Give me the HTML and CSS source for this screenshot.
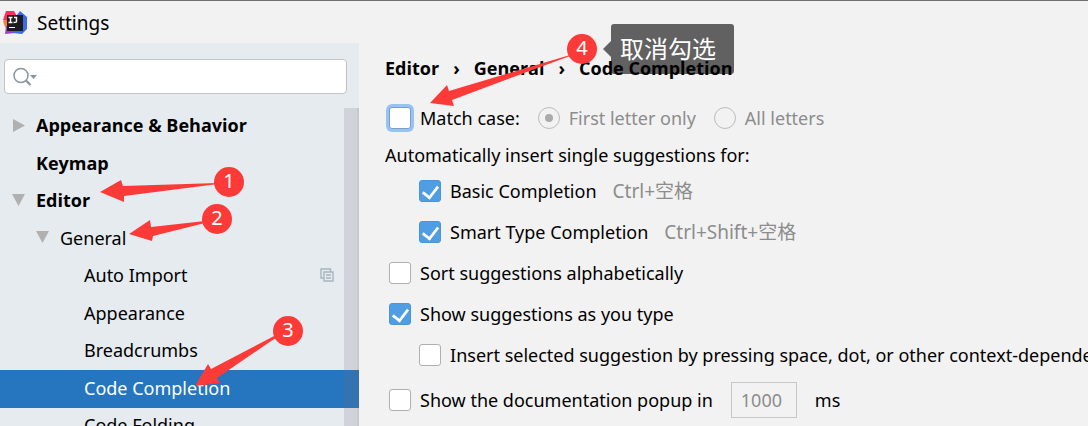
FILE: index.html
```html
<!DOCTYPE html>
<html lang="en">
<head>
<meta charset="utf-8">
<title>Settings</title>
<link rel="stylesheet" href="styles.css">
</head>
<body>
<div class="window">
  <header class="titlebar">
    <svg class="logo" viewBox="0 0 24 24" aria-hidden="true">
      <path fill="#fe315d" d="M3 0 11 0 14 5 8 12 0 9Z"/>
      <path fill="#fc801d" d="M0 10 7 8 9 18 2 16Z"/>
      <path fill="#9a3fd0" d="M3 15 14 16 12 22 2 23Z"/>
      <path fill="#3b6bea" d="M17 0 24 6 24 18 19 23 10 22 14 4Z"/>
      <path fill="#1d1b20" d="M4 4H20V20H4Z"/>
      <path fill="none" stroke="#fff" stroke-width="1.4" d="M5.500 6.500H9.500M7.500 6V12M5.500 11.500H9.500M11 6.500H14M13.500 6V10.500Q13.500 11.500 10.500 11.500"/>
      <path fill="#fff" d="M6 16h6v1H6Z"/>
    </svg>
    <span class="title">Settings</span>
  </header>
  <div class="content">
    <aside class="sidebar">
      <div class="search">
        <svg class="search-icon" viewBox="0 0 24 20" aria-hidden="true">
          <circle cx="8" cy="8.500" r="7" fill="none" stroke="#8a959e" stroke-width="1.500"/>
          <path d="M12.500 13 17.500 18" stroke="#8a959e" stroke-width="2.200"/>
          <path d="M17 8h7l-3.500 4Z" fill="#8a959e"/>
        </svg>
        <input class="search-input" type="text" aria-label="Search settings">
      </div>
      <div class="tree-pane">
        <ul class="tree">
          <li class="node top"><svg class="arrow" viewBox="0 0 13 13"><path d="M1 0 13 6.500 1 13Z"/></svg>Appearance &amp; Behavior</li>
          <li class="node top"><span class="arrow"></span>Keymap</li>
          <li class="node top"><svg class="arrow" viewBox="0 0 13 13"><path d="M0 0H13L6.500 12Z"/></svg>Editor</li>
          <li class="node second"><svg class="arrow" viewBox="0 0 13 13"><path d="M0 0H13L6.500 12Z"/></svg>General</li>
          <li class="node leaf">Auto Import
            <svg class="copy" viewBox="0 0 14 14" aria-hidden="true"><path fill="none" stroke="#a7b5be" stroke-width="1.400" d="M3.500 10H1V1H10.500V3.500M4 4H13V13H4ZM6 7H11M6 10H11"/></svg>
          </li>
          <li class="node leaf">Appearance</li>
          <li class="node leaf">Breadcrumbs</li>
          <li class="node leaf selected">Code Completion</li>
          <li class="node leaf">Code Folding</li>
        </ul>
        <div class="scrollbar"></div>
      </div>
    </aside>
    <main class="panel">
      <nav class="crumbs" aria-label="Breadcrumb">
        <span>Editor</span><span class="sep">›</span><span>General</span><span class="sep">›</span><span>Code Completion</span>
      </nav>
      <div class="row match">
        <label class="option"><input class="check focused" type="checkbox">Match case:</label>
        <label class="option muted"><input class="radio" type="radio" name="match" checked disabled>First letter only</label>
        <label class="option muted"><input class="radio" type="radio" name="match" disabled>All letters</label>
      </div>
      <p class="caption">Automatically insert single suggestions for:</p>
      <div class="row nested">
        <label class="option"><input class="check" type="checkbox" checked>Basic Completion</label>
        <span class="shortcut">Ctrl+空格</span>
      </div>
      <div class="row nested">
        <label class="option"><input class="check" type="checkbox" checked>Smart Type Completion</label>
        <span class="shortcut">Ctrl+Shift+空格</span>
      </div>
      <div class="row"><label class="option"><input class="check" type="checkbox">Sort suggestions alphabetically</label></div>
      <div class="row"><label class="option"><input class="check" type="checkbox" checked>Show suggestions as you type</label></div>
      <div class="row nested"><label class="option"><input class="check" type="checkbox">Insert selected suggestion by pressing space, dot, or other context-dependent keys</label></div>
      <div class="row popup">
        <label class="option"><input class="check" type="checkbox">Show the documentation popup in</label>
        <input class="delay" type="text" value="1000" aria-label="Delay in ms" disabled>
        <span>ms</span>
      </div>
    </main>
  </div>
  <svg class="pointers" viewBox="0 0 1088 426" aria-hidden="true">
    <g fill="#fc3a38">
      <path d="M100 192 121 180 123 186 218 183V184L124 196 124 202Z"/>
      <path d="M129 234 150 220 151 227 205 221V223L153 236 152 241Z"/>
      <path d="M195 386 208 364 211 369 276 335 277 337 217 378 220 383Z"/>
      <path d="M430 103 447 85 449 91 570 55V56L452 100 454 106Z"/>
    </g>
  </svg>
  <span class="badge one">1</span>
  <span class="badge two">2</span>
  <span class="badge three">3</span>
  <span class="badge four">4</span>
  <div class="tip" lang="zh">取消勾选</div>
</div>
</body>
</html>
```
FILE: styles.css
```css
* { box-sizing: border-box; }
body {
  margin: 0;
  overflow: hidden;
  background: #f2f2f2;
  color: #000;
  font: 18px/24px "Noto Sans", "Noto Sans CJK SC", sans-serif;
}
.window {
  position: relative;
  display: flex;
  flex-direction: column;
  height: 100vh;
  overflow: hidden;
  border-top: 1px solid #706e70;
}
.titlebar {
  display: flex;
  flex: none;
  align-items: center;
  gap: 10px;
  height: 42px;
  padding: 1px 3px 0;
}
.title { font-size: 19px; }
.logo { width: 24px; height: 24px; }
.content { display: flex; flex: 1; min-height: 0; }
.sidebar {
  display: flex;
  flex: none;
  flex-direction: column;
  width: 33%;
  background: #e6ebef;
}
.search {
  display: flex;
  flex: none;
  align-items: center;
  gap: 4px;
  height: 35px;
  margin: 16px 12px 14px 4px;
  padding: 0 8px;
  border: 1px solid #c4c4c4;
  border-radius: 4px;
  background: #fff;
}
.search-icon { width: 24px; height: 20px; }
.search-input {
  flex: 1;
  min-width: 0;
  border: 0;
  outline: 0;
  background: none;
  font: inherit;
}
.tree-pane { position: relative; flex: 1; min-height: 0; }
.tree {
  display: grid;
  grid-auto-rows: 37px 38px;
  margin: 0;
  padding: 0;
  list-style: none;
}
.node { display: flex; align-items: center; padding-bottom: 3px; }
.arrow { flex: none; width: 13px; height: 13px; fill: #b0b0b0; }
.top {
  gap: 11px;
  padding-left: 12px;
  font-family: "Open Sans", sans-serif;
  font-weight: 700;
}
.second { gap: 11px; padding-left: 36px; }
.leaf { padding-left: 84px; }
.selected { background: #2675bf; color: #fff; }
.copy { width: 14px; height: 14px; margin: 0 25px 0 auto; }
.scrollbar {
  position: absolute;
  top: 0;
  right: 0;
  bottom: 0;
  width: 15px;
  border-right: 2px solid rgba(110, 110, 120, 0.12);
  background: rgba(110, 110, 120, 0.18);
}
.panel {
  flex: 1;
  min-width: 0;
  padding-left: 26px;
  white-space: nowrap;
}
.crumbs {
  display: flex;
  align-items: center;
  gap: 14px;
  height: 50px;
  font-family: "Open Sans", sans-serif;
  font-weight: 700;
}
.row { display: flex; align-items: center; height: 41px; padding-left: 4px; }
.match { height: 50px; gap: 18px; }
.nested { gap: 16px; padding-left: 34px; }
.popup { height: 50px; gap: 18px; }
.option { display: flex; align-items: center; gap: 9px; }
.caption { height: 27px; margin: 0; }
.muted, .shortcut { color: #8c8c8c; }
.shortcut { font-size: 19px; }
.check {
  display: flex;
  flex: none;
  justify-content: center;
  appearance: none;
  width: 22px;
  height: 22px;
  margin: 0;
  padding-top: 2px;
  border: 1px solid #b0b0b0;
  border-radius: 3px;
  background: #fff;
}
.check:checked {
  padding-top: 1px;
  border-color: #4a94da;
  background: #4f9ee3;
}
.check:checked::before {
  content: "";
  width: 8px;
  height: 14px;
  border: solid #fff;
  border-width: 0 3px 3px 0;
  transform: rotate(38deg) scale(0.9);
}
.focused { border-color: #7b9fc9; box-shadow: 0 0 0 3px #97c3f3; }
.radio {
  flex: none;
  appearance: none;
  width: 22px;
  height: 22px;
  margin: 0;
  padding: 6px;
  border: 1px solid #bcbcbc;
  border-radius: 50%;
}
.radio:checked::before {
  content: "";
  display: block;
  width: 8px;
  height: 8px;
  border-radius: 50%;
  background: #ababab;
}
.delay {
  width: 66px;
  height: 36px;
  padding: 0 9px;
  border: 1px solid #c8c8c8;
  background: #f2f2f2;
  color: #8c8c8c;
  font: inherit;
}
.pointers { position: absolute; top: -1px; left: 0; width: 1088px; height: 426px; }
.badge {
  position: absolute;
  width: 30px;
  height: 30px;
  border-radius: 50%;
  background: #fc3a38;
  color: #fff;
  font-size: 20px;
  line-height: 28px;
  text-align: center;
}
.one { left: 214px; top: 166px; }
.two { left: 202px; top: 203px; }
.three { left: 273px; top: 315px; }
.four { left: 567px; top: 33px; }
.tip {
  position: absolute;
  left: 611px;
  top: 23px;
  height: 50px;
  padding: 0 18px 0 9px;
  border-radius: 3px;
  background: rgba(0, 0, 0, 0.6);
  color: #fff;
  font-size: 24px;
  line-height: 50px;
}
.tip::before {
  content: "";
  position: absolute;
  left: -8px;
  top: 17px;
  border: solid transparent;
  border-width: 8px 8px 8px 0;
  border-right-color: rgba(0, 0, 0, 0.6);
}
```
